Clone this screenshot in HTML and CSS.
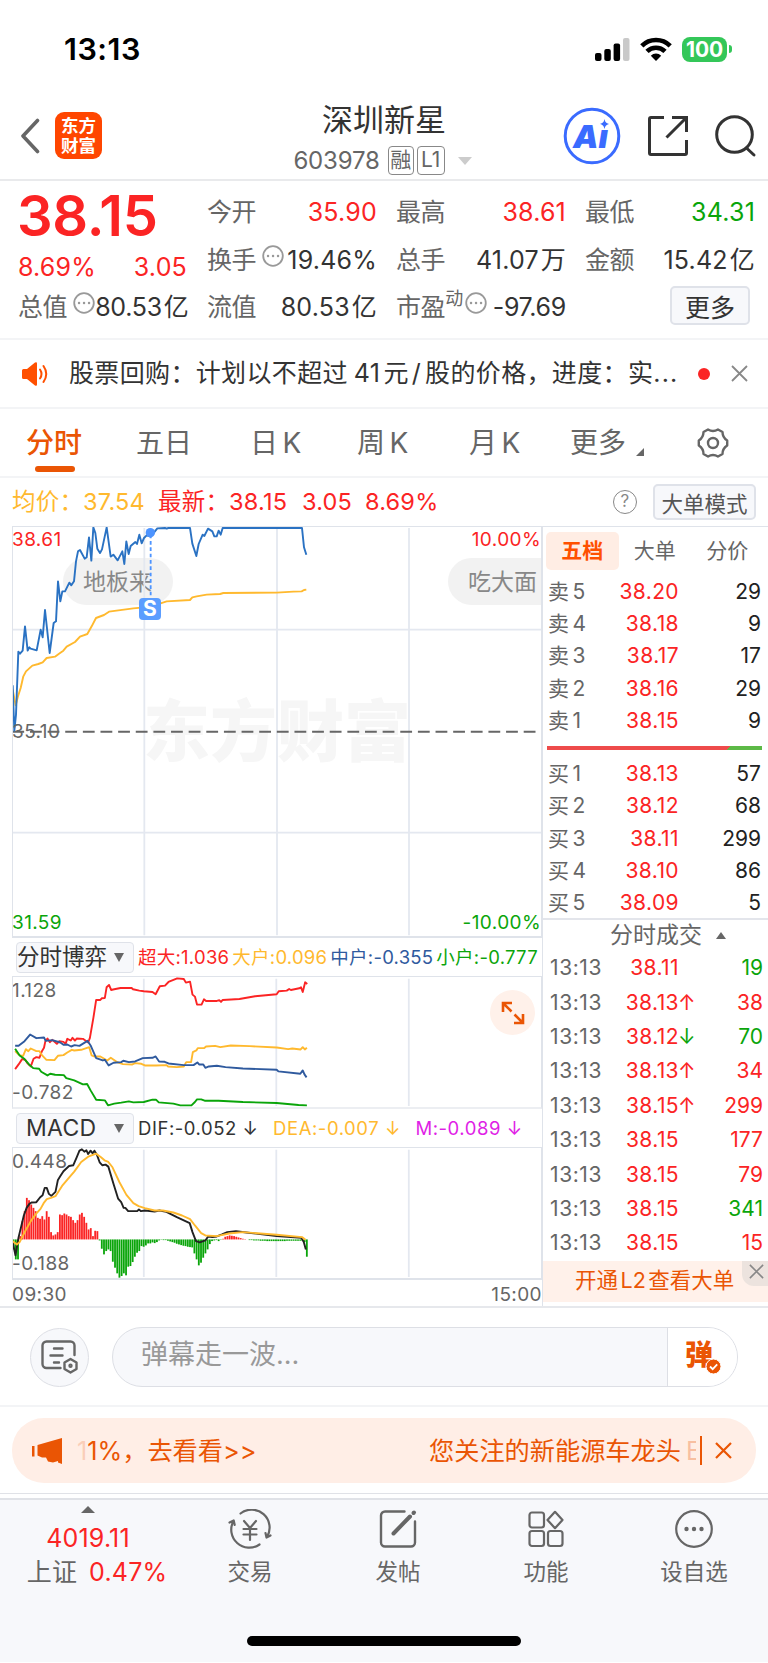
FILE: index.html
```
<!DOCTYPE html>
<html lang="zh-CN">
<head>
    <meta charset="UTF-8">
    <meta name="viewport" content="width=device-width, initial-scale=1.0">
    <title>深圳新星 603978</title>
    <link rel="stylesheet" href="styles.css">
</head>
<body>

    <!-- 状态栏 -->
    <div class="status-bar">
        <span class="clock">13:13</span>
        <div class="status-icons">
            <svg class="signal" width="35" height="24" viewBox="0 0 35 24">
                <rect x="0" y="16" width="6.5" height="8" rx="2"/>
                <rect x="9.3" y="12" width="6.5" height="12" rx="2"/>
                <rect x="18.6" y="6.5" width="6.5" height="17.5" rx="2"/>
                <rect x="28" y="1" width="6.5" height="23" rx="2" fill="#c9c9c9"/>
            </svg>
            <svg class="wifi" width="32" height="24" viewBox="0 0 32 24">
                <g fill="none" stroke="#000" stroke-width="4.6">
                    <path d="M1.8 8.8a20.3 20.3 0 0 1 28.4 0"/>
                    <path d="M7 14.4a12.8 12.8 0 0 1 18 0"/>
                </g>
                <path d="M16 24l-5.2-5.3a7.4 7.4 0 0 1 10.4 0z"/>
            </svg>
            <span class="battery">100</span>
            <i class="battery-nub"></i>
        </div>
    </div>

    <!-- 标题 -->
    <header class="header">
        <svg class="back" width="20" height="36" viewBox="0 0 20 36" fill="none" stroke="#666" stroke-width="3.6" stroke-linecap="round" stroke-linejoin="round"><path d="M17.500 2.500L3 18l14.500 15.500"/></svg>
        <div class="logo"><span>东方</span><span>财富</span></div>
        <div class="stock">
            <h1>深圳新星</h1>
            <div class="stock-code">603978<span class="tag">融</span><span class="tag tag-l1">L1</span><i class="caret"></i></div>
        </div>
        <div class="ai">
            <svg width="58" height="58" viewBox="0 0 58 58">
                <circle cx="29" cy="29" r="26.8" fill="none" stroke="#3a6bff" stroke-width="3"/>
                <path d="M41.500 12c.7 3 1.500 4 4.500 5-3 .8-3.800 2-4.500 5-.8-3-1.500-4.200-4.500-5 3-1 3.800-2 4.500-5z" fill="#3a6bff"/>
            </svg>
            <span>Aı</span>
        </div>
        <svg class="share" width="42" height="42" viewBox="0 0 42 42" fill="none" stroke="#333" stroke-width="3">
            <path d="M17 2.500H4a1.500 1.500 0 0 0-1.500 1.500v34a1.500 1.500 0 0 0 1.500 1.500h34a1.500 1.500 0 0 0 1.500-1.500V25M25 2.500h14.500V17M39 3L19.500 22.500"/>
        </svg>
        <svg class="search" width="43" height="43" viewBox="0 0 43 43" fill="none" stroke="#333" stroke-width="3" stroke-linecap="round"><circle cx="20.500" cy="19.500" r="17.800"/><path d="M32.500 33l7.500 7"/></svg>
    </header>

    <!-- 行情数据 -->
    <section class="quote">
        <div class="price">38.15</div>
        <div class="cell q2 red"><span>8.69%</span><span>3.05</span></div>
        <div class="cell q3"><label>总值<svg class="dots" viewBox="0 0 22 22"><circle cx="11" cy="11" r="9.800"/><path d="M6 11h.1M11 11h.1M16 11h.1"/></svg></label><b>80.53<u>亿</u></b></div>

        <div class="cell c2"><label>今开</label><b class="red">35.90</b></div>
        <div class="cell c2 r2"><label>换手<svg class="dots" viewBox="0 0 22 22"><circle cx="11" cy="11" r="9.800"/><path d="M6 11h.1M11 11h.1M16 11h.1"/></svg></label><b>19.46%</b></div>
        <div class="cell c2 r3"><label>流值</label><b>80.53<u>亿</u></b></div>

        <div class="cell c3"><label>最高</label><b class="red">38.61</b></div>
        <div class="cell c3 r2"><label>总手</label><b>41.07<u>万</u></b></div>
        <div class="cell c3 r3 pe"><label>市盈<sup>动</sup><svg class="dots" viewBox="0 0 22 22"><circle cx="11" cy="11" r="9.800"/><path d="M6 11h.1M11 11h.1M16 11h.1"/></svg></label><b>-97.69</b></div>

        <div class="cell c4"><label>最低</label><b class="green">34.31</b></div>
        <div class="cell c4 r2"><label>金额</label><b>15.42<u>亿</u></b></div>
        <div class="cell c4 r3 cell-end"><button class="more">更多</button></div>
    </section>

    <!-- 公告 -->
    <section class="notice">
        <svg width="28" height="24" viewBox="0 0 28 24" fill="#ff5000"><path d="M0 8.500Q0 7 1.500 7H5l8-6.500q2-1 2 1v21q0 2-2 1L5 17H1.500Q0 17 0 15.500z"/><g fill="none" stroke="#ff5000" stroke-width="2" stroke-linecap="round"><path d="M18 7.500q3 4.500 0 9"/><path d="M21.500 4q5.500 8 0 16"/></g></svg>
        <p>股票回购：计划以不超过<span class="num">41</span>元<span class="slash">/</span>股的价格，进度：实<span class="ell">...</span></p>
        <i class="red-dot"></i>
        <svg class="x" width="17" height="17" viewBox="0 0 17 17"><path d="M1 1l15 15M16 1L1 16"/></svg>
    </section>

    <!-- 周期切换 -->
    <nav class="tabs">
        <span class="active">分时</span>
        <span>五日</span>
        <span>日 K</span>
        <span>周 K</span>
        <span>月 K</span>
        <span class="tab-more">更多<i></i></span>
        <svg width="32" height="32" viewBox="0 0 32 32" fill="none" stroke="#666" stroke-width="2.400" stroke-linejoin="round">
            <path d="M11 2.500q5 3 10 0l4.500 2.500q0 5.500 4.700 8.500v5q-4.700 3-4.700 8.500L21 29.500q-5-3-10 0L6.500 27q0-5.500-4.700-8.500v-5Q6.500 10.500 6.500 5z"/>
            <circle cx="16" cy="16" r="5"/>
        </svg>
    </nav>

    <!-- 均价 / 最新 -->
    <section class="info">
        <span class="avg">均价：37.54</span>
        <span class="last red">最新：38.15</span>
        <span class="chg red">3.05</span>
        <span class="pct red">8.69%</span>
        <span class="help">?</span>
        <button>大单模式</button>
    </section>

    <main class="board">
        <div class="charts">
            <!-- 分时图 -->
            <div class="chart chart-main">
                <div class="watermark">东方财富</div>
                <div class="bubble bubble-left">地板来</div>
                <div class="bubble bubble-right">吃大面</div>
                <svg viewBox="36 34 1590 1233" preserveAspectRatio="none">
                    <g class="grid">
                        <path d="M36 345H1626M36 954H1626M433 40V1262M831 40V1262M1227 40V1262"/>
                    </g>
                    <path d="M37 651H1622" stroke="#666" stroke-width="6" stroke-dasharray="35.400 17.500" fill="none"/>
                    <path class="line yellow-line" d="M38 525L47 572 54 545 62 520 70 485 78 470 97 453 115 448 128 443 140 430 165 426 177 417 190 408 200 396 225 382 240 366 262 358 275 335 288 310 312 301 327 291 400 281 455 276 470 270 500 260 570 256 577 248 590 245 620 240 660 238 670 235 830 234 880 231 905 230 912 226 919 225"/>
                    <path class="line blue-line" d="M38 512L43 648 48 600 55 411 60 417 68 408 75 335 83 408 88 398 92 402 110 407 122 345 128 368 135 286 149 415 161 325 168 320 174 200 181 260 187 230 195 230 208 204 214 212 222 200 228 140 234 110 240 106 254 132 260 128 267 68 274 138 280 38 286 55 292 102 300 115 306 104 320 38 332 126 340 120 353 137 367 110 373 148 379 80 386 118 392 94 406 82 411 88 418 60 425 86 432 70 440 62 452 66 472 41 495 40 500 42 505 40 570 40 577 87 589 124 596 88 608 60 613 64 624 42 637 50 643 65 650 65 656 48 662 60 668 40 906 40 912 98 919 120"/>
                    <path d="M452 60V250" stroke="#4d94ff" stroke-width="5.500" stroke-dasharray="11 8" fill="none"/>
                    <circle cx="451" cy="54" r="14" fill="#4d94ff"/>
                </svg>
                <span class="mark-s">S</span>
                <span class="axis tl red">38.61</span>
                <span class="axis tr red">10.00%</span>
                <span class="axis ml">35.10</span>
                <span class="axis bl green">31.59</span>
                <span class="axis br green">-10.00%</span>
            </div>

            <!-- 分时博弈 -->
            <div class="indicator">
                <div class="select">分时博弈<i></i></div>
                <div class="legend legend-game">
                    <span class="red">超大:1.036</span>
                    <span class="yellow">大户:0.096</span>
                    <span class="navy">中户:-0.355</span>
                    <span class="green">小户:-0.777</span>
                </div>
            </div>
            <div class="chart chart-sub">
                <svg viewBox="36 136 1524 397" preserveAspectRatio="none">
                    <g class="grid"><path d="M415 144V527M796 144V527M1177 144V527"/></g>
                    <path class="line" stroke="#fb2424" d="M45 416L55 402 65 386 74 388 80 398 90 408 98 385 106 380 115 382 122 362 128 352 132 332 138 324 145 335 152 328 165 340 172 332 184 334 190 340 195 325 205 330 210 322 217 330 222 324 240 325 255 336 260 322 270 262 278 208 290 208 294 203 303 202 308 170 315 163 321 178 330 176 348 172 380 172 384 176 402 180 415 182 440 184 449 191 461 167 476 165 486 154 511 143 530 145 536 156 548 153 555 192 562 198 568 222 581 222 588 206 594 211 625 211 632 209 637 214 642 208 690 205 735 197 797 191 803 182 826 180 833 175 838 178 862 173 867 170 872 184 879 155 885 160"/>
                    <path class="line yellow-line" d="M45 362L55 372 62 376 68 376 76 356 83 362 90 354 106 362 115 362 122 374 135 388 158 389 168 376 184 374 195 366 208 358 215 360 235 358 258 350 265 375 272 378 290 378 310 390 320 382 340 396 355 401 382 402 390 398 408 400 418 405 450 405 480 404 485 408 510 410 530 408 537 395 551 395 556 365 566 360 570 353 588 353 594 348 620 346 635 350 665 345 720 347 797 351 830 356 842 354 866 357 872 350 878 357 884 352"/>
                    <path class="line" stroke="#2f5a9e" d="M45 346L55 346 72 332 88 312 106 323 128 321 133 331 152 329 175 336 184 343 195 342 206 348 216 344 230 346 253 331 262 345 278 383 297 390 303 388 314 405 328 397 350 395 356 391 372 395 390 393 412 383 440 382 449 378 459 393 475 394 486 399 530 404 558 404 569 396 574 402 586 402 592 412 602 408 625 406 650 410 700 414 797 418 802 423 865 430 872 420 877 432 883 441"/>
                    <path class="line" stroke="#0aa50a" d="M45 355L58 375 70 384 85 402 97 413 114 415 120 424 138 435 146 430 160 433 185 434 192 443 215 450 240 462 252 461 262 480 278 508 303 510 312 525 330 520 350 517 372 513 385 516 415 515 440 508 450 508 458 516 500 520 520 525 552 525 562 515 568 507 580 507 590 511 630 511 700 515 797 518 860 524 884 525"/>
                </svg>
                <span class="axis sub-tl">1.128</span>
                <span class="axis sub-bl">-0.782</span>
                <div class="expand"><svg width="24" height="24" viewBox="0 0 24 24" fill="none" stroke="#ea5504" stroke-width="2.600"><path d="M2 11V2h9M2 2l8.500 8.500M22 13v9h-9M22 22l-8.500-8.500"/></svg></div>
            </div>

            <!-- MACD -->
            <div class="indicator">
                <div class="select select-macd">MACD<i></i></div>
                <div class="legend legend-macd">
                    <span>DIF:-0.052 ↓</span>
                    <span class="yellow">DEA:-0.007 ↓</span>
                    <span class="pink">M:-0.089 ↓</span>
                </div>
            </div>
            <div class="chart chart-sub chart-macd">
                <svg viewBox="36 139 1524 397" preserveAspectRatio="none">
                    <g class="grid"><path d="M415 147V530M796 147V530M1177 147V530"/></g>
                    <g id="macdBars"></g>
                    <path class="line" stroke="#222" d="M38 425L46 465 55 410 62 380 70 345 78 322 86 310 92 306 106 305 117 290 124 284 130 262 136 262 142 280 149 286 161 274 168 238 176 225 184 212 200 196 212 194 222 170 230 150 237 146 244 153 250 149 255 160 262 150 268 158 273 150 280 162 288 185 296 194 305 192 313 198 328 250 341 294 350 305 357 322 362 322 370 332 396 332 401 327 407 332 418 330 446 333 460 330 480 334 510 350 547 368 555 395 565 422 576 426 592 420 600 408 612 410 625 408 640 402 655 395 680 392 710 396 797 407 868 412 875 425 881 447"/>
                    <path class="line yellow-line" d="M36 421L50 432 58 425 75 390 90 362 105 340 118 325 127 308 136 296 148 292 161 287 180 256 205 225 215 213 235 184 255 168 278 159 292 170 302 179 313 184 325 200 345 245 365 283 385 308 400 317 418 323 446 330 470 330 500 336 525 345 548 356 562 375 580 398 592 405 625 407 660 399 700 395 797 403 870 410 880 418"/>
                </svg>
                <span class="axis sub-tl">0.448</span>
                <span class="axis sub-bl">-0.188</span>
            </div>
            <div class="times"><span>09:30</span><span>15:00</span></div>
        </div>

        <!-- 五档盘口 -->
        <aside class="side">
            <div class="side-tabs">
                <span class="on">五档</span><span>大单</span><span>分价</span>
            </div>
            <div class="levels">
                <div><span>卖 5</span><b>38.20</b><em>29</em></div>
                <div><span>卖 4</span><b>38.18</b><em>9</em></div>
                <div><span>卖 3</span><b>38.17</b><em>17</em></div>
                <div><span>卖 2</span><b>38.16</b><em>29</em></div>
                <div><span>卖 1</span><b>38.15</b><em>9</em></div>
            </div>
            <div class="ratio"></div>
            <div class="levels levels-buy">
                <div><span>买 1</span><b>38.13</b><em>57</em></div>
                <div><span>买 2</span><b>38.12</b><em>68</em></div>
                <div><span>买 3</span><b>38.11</b><em>299</em></div>
                <div><span>买 4</span><b>38.10</b><em>86</em></div>
                <div><span>买 5</span><b>38.09</b><em>5</em></div>
            </div>
            <div class="deal-title">分时成交<i></i></div>
            <div class="deals">
                <div><span>13:13</span><b>38.11</b><u></u><em class="green">19</em></div>
                <div><span>13:13</span><b>38.13</b><u>↑</u><em>38</em></div>
                <div><span>13:13</span><b>38.12</b><u class="green">↓</u><em class="green">70</em></div>
                <div><span>13:13</span><b>38.13</b><u>↑</u><em>34</em></div>
                <div><span>13:13</span><b>38.15</b><u>↑</u><em>299</em></div>
                <div><span>13:13</span><b>38.15</b><u></u><em>177</em></div>
                <div><span>13:13</span><b>38.15</b><u></u><em>79</em></div>
                <div><span>13:13</span><b>38.15</b><u></u><em class="green">341</em></div>
                <div><span>13:13</span><b>38.15</b><u></u><em>15</em></div>
            </div>
            <div class="promo">开通 L2 查看大单
                <span class="promo-close"><svg class="x" width="15" height="15" viewBox="0 0 17 17"><path d="M1 1l15 15M16 1L1 16"/></svg></span>
            </div>
        </aside>
    </main>

    <!-- 弹幕 -->
    <section class="danmu">
        <div class="danmu-set">
            <svg width="37" height="34" viewBox="0 0 37 34" fill="none" stroke="#666" stroke-width="2.400" stroke-linecap="round">
                <path d="M19.500 28H5.500a4 4 0 0 1-4-4V5.500a4 4 0 0 1 4-4h24a4 4 0 0 1 4 4V15M13 8.500h8.500M9.500 15.500h12M13 22.500h5"/>
                <path d="M29.500 19l6 3.500v6.500l-6 3.500-6-3.500v-6.500z" stroke-linejoin="round"/><circle cx="29.500" cy="25.700" r="1"/>
            </svg>
        </div>
        <div class="danmu-input">
            <span>弹幕走一波...</span>
            <div class="danmu-send">弹
                <svg width="17" height="17" viewBox="-1 -1 17 17"><circle cx="7.500" cy="7.500" r="7.500" fill="#ea5504" stroke="#fff"/><path d="M4 7.500l2.700 2.700 4.500-4.900" fill="none" stroke="#fff" stroke-width="1.800"/></svg>
            </div>
        </div>
    </section>

    <!-- 滚动提示 -->
    <section class="ad">
        <svg width="31" height="26" viewBox="0 0 31 26" fill="#ea5504"><path d="M0 8h2.500v10.500H0zM5.500 7L30 0v26l-4-1.500v-1.500l-5 1.500-5-1-2-4h-4l-4.500-2z"/></svg>
        <p><span class="ad-left"><span class="ad-fade">1</span>1%，去看看&gt;&gt;</span><span>您关注的新能源车龙头</span><span class="ad-cut">E</span></p>
        <i></i>
        <svg class="x x-orange" width="17" height="17" viewBox="0 0 17 17"><path d="M1 1l15 15M16 1L1 16"/></svg>
    </section>

    <!-- 底部导航 -->
    <footer class="bottom">
        <div class="index">
            <i></i>
            <span class="red">4019.11</span>
            <span>上证<b class="red">0.47%</b></span>
        </div>
        <div class="item">
            <svg width="44" height="40" viewBox="0 0 44 40" fill="none" stroke="#666" stroke-width="2.200" stroke-linecap="round" stroke-linejoin="round">
                <path d="M12.500 4.500A18 18 0 0 1 39 28M31.500 35.500A18 18 0 0 1 5.500 12M1.500 13.500l4.200-2 1 4.500M42.500 26.500l-4 2-1-4.500"/>
                <path d="M16 12l6 7 6-7M22 19v12M15.500 20h13M15.500 25.500h13"/>
            </svg>
            <span>交易</span>
        </div>
        <div class="item">
            <svg width="38" height="40" viewBox="0 0 38 40" fill="none" stroke="#666" stroke-width="2.400" stroke-linecap="round">
                <path d="M25.500 2.500H6A4 4 0 0 0 2 6.500v27a4 4 0 0 0 4 4h26a4 4 0 0 0 4-4V12.500"/>
                <path d="M14.500 24.500L31 7.500" stroke-width="4"/><path d="M34.500 4l.5-.5" stroke-width="4"/>
            </svg>
            <span>发帖</span>
        </div>
        <div class="item">
            <svg width="36" height="38" viewBox="0 0 36 38" fill="none" stroke="#666" stroke-width="2.200">
                <rect x="1.500" y="2.500" width="14.500" height="15" rx="2.500"/><rect x="1.500" y="21" width="14.500" height="15" rx="2.500"/><rect x="20" y="21" width="14.500" height="15" rx="2.500"/>
                <path d="M27 1.800l7.500 8.200-7.500 8.200-7.500-8.200z" stroke-linejoin="round"/>
            </svg>
            <span>功能</span>
        </div>
        <div class="item">
            <svg width="40" height="40" viewBox="0 0 40 40"><circle cx="20" cy="20" r="17.800" fill="none" stroke="#666" stroke-width="2.200"/><g fill="#666"><circle cx="12.500" cy="20" r="2.200"/><circle cx="20" cy="20" r="2.200"/><circle cx="27.500" cy="20" r="2.200"/></g></svg>
            <span>设自选</span>
        </div>
        <div class="home-bar"></div>
    </footer>

    <script>
        // MACD 柱状数据，每分钟一根
        const bars = [-30, -60, -60, 10, 55, 85, 125, 118, 105, 95, 85, 65, 62, 70, 60, 85, 68, 22, 12, 15, 22, 75, 73, 78, 75, 70,
            68, 58, 50, 58, 75, 80, 68, 50, 30, 34, 10, 26, 25, -3, -28, -45, -35, -30, -35, -67, -85, -102, -115, -110, -102, -108,
            -82, -80, -68, -52, -40, -35, -20, -22, -18, -12, -12, -9, -11, -8, -3, -1, -2, -2, -4, -6, -8, -10, -13, -15, -17, -19,
            -20, -22, -23, -24, -42, -60, -78, -70, -55, -42, -30, -14, -5, -3, -2, -5, -1, 2, 8, 10, 12, 11, 10, 8, 6, 4, 2, 1, 0,
            -2, -2, -3, -3, -3, -4, -4, -4, -5, -5, -5, -5, -5, -5, -5, -5, -5, -4, -4, -4, -4, -4, -4, -4, -4, -8, -52];
        const zero = 417;
        const group = document.getElementById('macdBars');

        bars.forEach((v, i) => {
            const rect = document.createElementNS('http://www.w3.org/2000/svg', 'rect');
            rect.setAttribute('x', 38 + i * 6.34);
            rect.setAttribute('width', 5.2);
            rect.setAttribute('y', v > 0 ? zero - v : zero);
            rect.setAttribute('height', Math.abs(v));
            rect.setAttribute('fill', v > 0 ? '#fb2424' : '#0aa50a');
            group.appendChild(rect);
        });
    </script>

</body>
</html>
```

FILE: styles.css
```
* {
    box-sizing: border-box;
}

body {
    margin: 0;
    width: 768px;
    background-color: #fff;
    color: #333;
    font-family: Inter, "Noto Sans CJK SC", sans-serif;
    font-size: 24px;
    line-height: 1;
    white-space: nowrap;
}

h1, p {
    margin: 0;
    font-weight: normal;
}

b, em, u {
    font-weight: normal;
    font-style: normal;
    text-decoration: none;
}

svg {
    display: block;
    flex: none;
}

button {
    font-family: inherit;
    color: #333;
    background-color: #f7f8fb;
    border: 2px solid #dfe2e9;
    border-radius: 5px;
    padding: 0;
}

.red { color: #fb2424; }
.green { color: #0aa50a; }
.yellow { color: #ffb92e; }
.navy { color: #2f5a9e; }
.pink { color: #e01ee6; }

.x {
    fill: none;
    stroke: #888;
    stroke-width: 1.8;
}

.x-orange {
    stroke: #ea5504;
    stroke-width: 2.2;
}

/* 状态栏 */
.status-bar {
    height: 98px;
    padding: 0 36px 0 64px;
    display: flex;
    align-items: center;
    justify-content: space-between;
}

.clock {
    font-size: 30.500px;
    font-weight: 600;
    color: #000;
    letter-spacing: 0.5px;
}

.status-icons {
    display: flex;
    align-items: center;
}

.signal {
    margin-right: 10px;
}

.wifi {
    margin-right: 10px;
}

.battery {
    width: 45px;
    height: 25px;
    line-height: 25px;
    border-radius: 8px;
    background-color: #34c759;
    color: #fff;
    font-size: 21px;
    font-weight: 700;
    text-align: center;
    letter-spacing: -0.2px;
}

.battery-nub {
    width: 3px;
    height: 8px;
    margin-left: 2px;
    border-radius: 0 4px 4px 0;
    background-color: #34c759;
}

/* 标题 */
.header {
    height: 83px;
    padding: 0 11px 5px 20px;
    display: flex;
    align-items: center;
    border-bottom: 2px solid #e9eaec;
}

.logo {
    width: 47px;
    height: 47px;
    margin: -1px 0 0 15px;
    border-radius: 9px;
    background-color: #ff4600;
    color: #fff;
    font-size: 17.500px;
    font-weight: 700;
    display: flex;
    flex-direction: column;
    align-items: center;
    justify-content: center;
    gap: 2px;
}

.stock {
    width: 200px;
    margin-left: 182px;
    padding-top: 8px;
    display: flex;
    flex-direction: column;
    align-items: center;
}

.stock h1 {
    font-size: 31px;
    line-height: 41px;
}

.stock-code {
    display: flex;
    align-items: center;
    height: 41px;
    margin-left: -3px;
    color: #666;
    letter-spacing: -0.2px;
}

.tag {
    width: 26px;
    height: 29px;
    line-height: 26px;
    margin-left: 8px;
    border: 1.5px solid #888;
    border-radius: 4px;
    font-size: 21px;
    text-align: center;
}

.tag-l1 {
    width: 28px;
    margin-left: 3px;
}

.caret {
    margin-left: 13px;
    border: 7px solid transparent;
    border-top: 8px solid #ccc;
    border-bottom: 0;
}

.ai {
    position: relative;
    margin-left: auto;
}

.ai span {
    position: absolute;
    left: 10px;
    top: 12px;
    font-size: 32px;
    line-height: 36px;
    font-weight: 900;
    font-style: italic;
    color: #3a6bff;
}

.share {
    margin-left: 26px;
}

.search {
    margin-left: 25px;
}

/* 行情 */
.quote {
    height: 159px;
    padding: 8px 13px 0 18px;
    display: grid;
    grid-template-columns: repeat(4, 169px);
    grid-template-rows: 47px 47px 48px;
    column-gap: 20px;
    border-bottom: 2px solid #f3f4f6;
    font-size: 25px;
    letter-spacing: 0.2px;
}

.price {
    grid-area: 1 / 1;
    margin-left: -1px;
    padding-top: 0;
    font-size: 56px;
    font-weight: 600;
    letter-spacing: -0.3px;
    line-height: 55px;
    color: #fb2424;
}

.cell {
    display: flex;
    align-items: center;
    justify-content: space-between;
    grid-row: 1;
}

.q2 { grid-area: 2 / 1; padding-top: 15px; }
.q3 { grid-area: 3 / 1; letter-spacing: -0.3px; }
.c2 { grid-column: 2; }
.c3 { grid-column: 3; }
.c4 { grid-column: 4; }
.r2 { grid-row: 2; padding-top: 1px; }
.r3 { grid-row: 3; }

.cell label {
    display: flex;
    align-items: center;
    color: #666;
    letter-spacing: -0.4px;
}

.cell b {
    margin-right: -1px;
}

.cell u {
    margin-left: 2px;
}

.cell sup {
    font-size: 18px;
    margin-top: -16px;
}

.pe {
    letter-spacing: -0.3px;
}

.dots {
    width: 22px;
    height: 22px;
    margin: -9px 0 0 6px;
    fill: none;
    stroke: #999;
    stroke-width: 1.8;
}

sup + .dots {
    margin-left: 2px;
}

.dots path {
    stroke-width: 2.4;
    stroke-linecap: round;
}

.cell-end {
    justify-content: flex-end;
    padding: 0 4px 4px 0;
}

.more {
    width: 80px;
    height: 39px;
    font-size: 25px;
}

/* 公告 */
.notice {
    height: 69px;
    padding: 0 20px 0 22px;
    display: flex;
    align-items: center;
    border-bottom: 2px solid #f3f4f6;
}

.notice p {
    width: 622px;
    margin-left: 19px;
    font-size: 25px;
    letter-spacing: 0.35px;
}

.notice .num {
    margin: 0 3px 0 6px;
}

.notice .slash {
    margin: 0 4px 0 3px;
}

.notice .ell {
    letter-spacing: 1.2px;
}

.red-dot {
    width: 12px;
    height: 12px;
    margin-left: 7px;
    border-radius: 50%;
    background-color: #fb2424;
}

.notice .x {
    margin-left: auto;
}

/* 周期 */
.tabs {
    height: 69px;
    padding-left: 26px;
    display: grid;
    grid-template-columns: 110px 114px 107px 112px 101px 127px 40px;
    align-items: center;
    border-bottom: 2px solid #f3f4f6;
    color: #666;
    font-size: 28px;
    word-spacing: -3.500px;
}

.tabs .active {
    position: relative;
    color: #ea5504;
    font-weight: 500;
}

.tabs .active::after {
    content: "";
    position: absolute;
    left: 9px;
    bottom: -15px;
    width: 40px;
    height: 6px;
    border-radius: 3px;
    background-color: #ea5504;
}

.tab-more i {
    display: inline-block;
    margin-left: 10px;
    border-left: 8px solid transparent;
    border-bottom: 8px solid #666;
    transform: translateY(3px);
}

/* 均价行 */
.info {
    height: 48px;
    padding: 0 12px;
    display: flex;
    align-items: center;
    font-size: 23.500px;
    letter-spacing: 0.2px;
}

.avg {
    width: 146px;
    color: #ffb92e;
}

.last {
    width: 144px;
}

.chg {
    width: 63px;
}

.help {
    width: 24px;
    height: 24px;
    margin-left: auto;
    border: 1.5px solid #888;
    border-radius: 50%;
    color: #888;
    font-size: 17px;
    line-height: 21px;
    text-align: center;
}

.info button {
    width: 103px;
    height: 36px;
    margin-left: 16px;
    color: #555;
    font-size: 21.500px;
}

/* 图表 */
.board {
    height: 782px;
    display: flex;
    border-bottom: 2px solid #e6e8ec;
}

.charts {
    width: 530px;
    margin-left: 12px;
}

.chart {
    position: relative;
    overflow: hidden;
    border: 1px solid #dfe3ea;
}

.chart svg {
    position: relative;
    width: 530px;
    margin: -1px;
}

.chart-main {
    height: 412px;
    border-bottom: 2px solid #dfe3ea;
}

.chart-main > svg {
    height: 411px;
}

.chart-sub {
    height: 133px;
    border-bottom: 2px solid #eceef2;
}

.chart-sub > svg {
    height: 132px;
}

.chart-macd {
    border-color: #dfe3ea;
}

.grid path {
    fill: none;
    stroke: #e4e8f0;
    stroke-width: 1.8px;
    vector-effect: non-scaling-stroke;
}

.line {
    fill: none;
    stroke-width: 1.9px;
    stroke-linejoin: round;
    vector-effect: non-scaling-stroke;
}

.blue-line { stroke: #2a72c3; }
.yellow-line { stroke: #ffb92e; }

.watermark {
    position: absolute;
    left: 130px;
    top: 171px;
    font-size: 67px;
    font-weight: 900;
    color: #f6f6f6;
}

.bubble {
    position: absolute;
    top: 31px;
    height: 47px;
    line-height: 49px;
    padding: 0 20px;
    border-radius: 24px;
    background-color: #f2f2f2;
    color: #888;
    font-size: 23px;
}

.bubble-left {
    left: 50px;
    width: 110px;
}

.bubble-right {
    left: 435px;
    width: 130px;
}

.mark-s {
    position: absolute;
    left: 126px;
    top: 71px;
    width: 22px;
    height: 22px;
    border-radius: 4px;
    background-color: #5b9dff;
    color: #fff;
    font-size: 21px;
    font-weight: 700;
    line-height: 22px;
    text-align: center;
}

.axis {
    position: absolute;
    color: #666;
    font-size: 19px;
    letter-spacing: 0.4px;
}

.axis.red { color: #fb2424; }
.axis.green { color: #0aa50a; }

.tl { left: -1px; top: 3px; }
.tr { right: 0; top: 3px; }
.ml { left: -1px; top: 195px; }
.bl { left: -1px; bottom: 4px; }
.br { right: 0; bottom: 4px; }
.sub-tl { left: -1px; top: 4px; }
.sub-bl { left: -1px; bottom: 5px; }

.expand {
    position: absolute;
    left: 477px;
    top: 13px;
    width: 45px;
    height: 45px;
    border-radius: 50%;
    background-color: #fff1ea;
    display: flex;
    align-items: center;
    justify-content: center;
}

.chart .expand svg {
    width: 24px;
    margin: 0;
}

.indicator {
    height: 38px;
    padding-left: 4px;
    display: flex;
    align-items: center;
}

.select {
    width: 118px;
    height: 31px;
    border: 1.5px solid #dfe2e9;
    border-radius: 4px;
    background-color: #f7f8fb;
    font-size: 22.500px;
    display: flex;
    align-items: center;
    justify-content: space-between;
    padding-right: 9px;
}

.select i {
    border: 5px solid transparent;
    border-top: 9px solid #666;
    border-bottom: 0;
}

.select-macd {
    padding-left: 9px;
    font-size: 23px;
    letter-spacing: 0.3px;
}

.legend {
    display: flex;
    margin-left: 4px;
    font-size: 18.500px;
}

.legend-game {
    gap: 3px;
    letter-spacing: 0.25px;
}

.legend-macd {
    gap: 14.500px;
    letter-spacing: 0.55px;
}

.times {
    height: 28px;
    display: flex;
    align-items: center;
    justify-content: space-between;
    color: #666;
    font-size: 19px;
    letter-spacing: 0.4px;
}

/* 盘口 */
.side {
    width: 226px;
    border-left: 1px solid #dfe3ea;
    font-size: 21px;
}

.side-tabs {
    height: 49px;
    padding: 5px 0 5px 3px;
    display: flex;
    border-top: 1px solid #dfe3ea;
    color: #666;
}

.side-tabs span {
    width: 72.500px;
    line-height: 38px;
    text-align: center;
}

.side-tabs .on {
    border-radius: 5px;
    background-color: #ffede4;
    color: #ff5000;
    font-weight: 700;
}

.levels div {
    height: 32.300px;
    padding: 0 7px 0 5px;
    display: flex;
    align-items: center;
}

.levels span {
    width: 50px;
    color: #666;
    word-spacing: -2.500px;
}

.levels b {
    width: 81px;
    text-align: right;
    letter-spacing: 0.4px;
    color: #fb2424;
}

.levels em {
    flex: 1;
    text-align: right;
    color: #222;
}

.ratio {
    height: 4px;
    margin: 10px 6px 5px 4px;
    background: linear-gradient(135deg, #ee4b4b 84%, #5cb946 84%);
}

.levels-buy {
    height: 165px;
    padding-top: 2px;
    border-bottom: 2px solid #e3e5eb;
}

.deal-title {
    height: 30px;
    padding: 1px 0 0 67px;
    display: flex;
    align-items: center;
    color: #666;
    font-size: 23px;
}

.deal-title i {
    margin-left: 14px;
    border: 5.500px solid transparent;
    border-bottom: 7px solid #666;
    border-top: 0;
}

.deals {
    height: 311px;
}

.deals div {
    height: 34.400px;
    padding: 0 5px 0 7px;
    display: flex;
    align-items: center;
}

.deals span {
    width: 54px;
    color: #666;
    letter-spacing: 0.6px;
}

.deals b {
    width: 75px;
    text-align: right;
    letter-spacing: 0.4px;
    color: #fb2424;
}

.deals u {
    width: 16px;
    margin-left: -1px;
    color: #fb2424;
}

.deals .green {
    color: #0aa50a;
}

.deals em {
    flex: 1;
    text-align: right;
    color: #fb2424;
}

.promo {
    position: relative;
    height: 41px;
    line-height: 38px;
    padding-left: 32px;
    background-color: #fff1ea;
    color: #ea5504;
    font-size: 21.500px;
    word-spacing: -3.500px;
}

.promo-close {
    position: absolute;
    right: 0;
    top: 0;
    width: 26px;
    height: 25px;
    padding: 0 0 4px 2px;
    border-radius: 0 0 0 12px;
    background-color: #ece3de;
    display: flex;
    align-items: center;
    justify-content: center;
}

/* 弹幕 */
.danmu {
    height: 99px;
    padding: 1px 30px 0;
    display: flex;
    align-items: center;
    border-bottom: 2px solid #f3f4f6;
}

.danmu-set {
    width: 59px;
    height: 59px;
    border: 1.5px solid #dddfe5;
    border-radius: 50%;
    background-color: #f7f8fb;
    display: flex;
    align-items: center;
    justify-content: center;
}

.danmu-input {
    width: 626px;
    height: 60px;
    margin-left: 23px;
    border: 1.5px solid #dddfe5;
    border-radius: 30px;
    background-color: #f7f8fb;
    overflow: hidden;
    display: flex;
    align-items: center;
    justify-content: space-between;
    padding-left: 28px;
    color: #999;
    font-size: 27px;
}

.danmu-input > span {
    margin-top: -5px;
}

.danmu-send {
    position: relative;
    width: 70px;
    height: 60px;
    line-height: 57px;
    padding-left: 17px;
    border-left: 1.5px solid #dddfe5;
    background-color: #fff;
    color: #ea5504;
    font-size: 28px;
    font-weight: 900;
}

.danmu-send svg {
    position: absolute;
    left: 37px;
    top: 31px;
}

/* 滚动提示 */
.ad {
    height: 65px;
    margin: 11px 12px 10px;
    padding: 0 24px 0 20px;
    border-radius: 32px;
    background-color: #ffeee6;
    color: #ea5504;
    display: flex;
    align-items: center;
}

.ad p {
    width: 623px;
    margin-left: 14px;
    display: flex;
    font-size: 25.200px;
    overflow: hidden;
    line-height: 34px;
}

.ad-left {
    width: 352px;
}

.ad-fade {
    opacity: 0.2;
}

.ad-cut {
    margin-left: 5px;
    opacity: 0.3;
    width: 10px;
    overflow: hidden;
}

.ad i {
    width: 1.5px;
    height: 29px;
    background-color: #ea5504;
}

.ad .x {
    margin-left: auto;
}

/* 底部 */
.bottom {
    position: relative;
    height: 169px;
    padding-top: 5px;
    display: grid;
    grid-template-columns: 176px repeat(4, 148px);
    border-top: 1px solid #e0e2e7;
    background: linear-gradient(#fff 4px, #e0e2e7 4px, #e0e2e7 6px, #f7f8fb 6px);
    color: #666;
}

.index {
    display: flex;
    flex-direction: column;
    align-items: center;
    padding-top: 7px;
}

.index i {
    border: 7px solid transparent;
    border-bottom: 7px solid #666;
    border-top: 0;
}

.index span {
    margin-top: 13px;
    font-size: 25px;
    letter-spacing: 0.2px;
}

.index span + span {
    margin-top: 9px;
    margin-left: 18px;
}

.index b {
    margin-left: 12px;
}

.item {
    display: flex;
    flex-direction: column;
    align-items: center;
    padding-top: 10px;
    font-size: 22.500px;
}

.item svg {
    height: 40px;
}

.item span {
    margin-top: 12px;
}

.home-bar {
    position: absolute;
    left: 247px;
    bottom: 16px;
    width: 274px;
    height: 10px;
    border-radius: 5px;
    background-color: #000;
}
```
